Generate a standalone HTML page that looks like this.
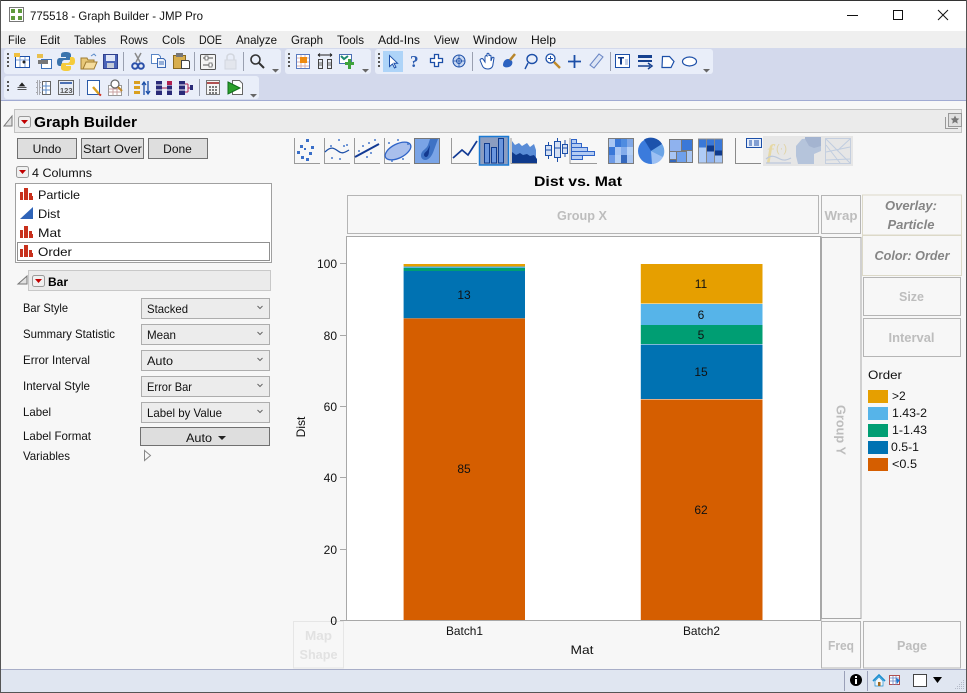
<!DOCTYPE html>
<html><head><meta charset="utf-8"><title>775518 - Graph Builder - JMP Pro</title>
<style>
html,body{margin:0;padding:0;background:#f7f7f7;width:967px;height:693px;overflow:hidden}
svg{display:block}
text{font-family:"Liberation Sans",sans-serif;font-size:12px;fill:#111}
.b{font-weight:bold}
.z{font-weight:bold;fill:#bdbdbd;text-anchor:middle;font-size:13px}
.c{text-anchor:middle}
.ov{font-weight:bold;font-style:italic;fill:#858585;text-anchor:middle;font-size:13px}
</style></head><body>
<svg width="967" height="693" viewBox="0 0 967 693" xmlns="http://www.w3.org/2000/svg">
<defs>
<g id="red"><rect x=".5" y=".5" width="12" height="11" rx="2" fill="#f0f0f0" stroke="#9a9a9a"/><path d="M3 4h7l-3.500 4z" fill="#c00000"/></g>
<g id="nom"><path d="M0 13V5h3v8zM4 13V1h4v12zM9 13V6h3v3h1v4z" fill="#c8301c"/></g>
<g id="combo"><rect x=".5" y=".5" width="128" height="20" fill="#ececec" stroke="#adadad"/><path d="M116.500 8l2.500 2.500 2.500-2.500" fill="none" stroke="#666"/></g>
<path id="ovf" d="M0 0h7M0 2h7l-3.500 3.500z" fill="#666" stroke="none"/>
<g id="axes"><path d="M.5 0v25.500H26" fill="none" stroke="#9a9a9a"/></g>
</defs>

<rect width="967" height="693" fill="#f7f7f7"/>
<!-- title bar -->
<rect width="967" height="31" fill="#fff"/>
<rect width="967" height="1" fill="#333"/>
<rect x="9.500" y="7.500" width="14" height="14" fill="#fff" stroke="#777"/>
<path d="M11 9h4v4h-4zM18 9h4v4h-4zM11 16h4v4h-4zM18 16h4v4h-4z" fill="#5f9a3c"/>
<text x="30" y="20" textLength="173" lengthAdjust="spacingAndGlyphs">775518 - Graph Builder - JMP Pro</text>
<path d="M847 15.500h11" stroke="#111"/>
<rect x="893.500" y="10.500" width="9" height="9" fill="none" stroke="#111"/>
<path d="M938 10l10 10M948 10l-10 10" stroke="#111" fill="none"/>
<!-- menu -->
<rect y="31" width="967" height="17" fill="#efefef"/>
<g>
<text x="8" y="44" textLength="18" lengthAdjust="spacingAndGlyphs">File</text>
<text x="40" y="44" textLength="20" lengthAdjust="spacingAndGlyphs">Edit</text>
<text x="74" y="44" textLength="32" lengthAdjust="spacingAndGlyphs">Tables</text>
<text x="120" y="44" textLength="28" lengthAdjust="spacingAndGlyphs">Rows</text>
<text x="162" y="44" textLength="23" lengthAdjust="spacingAndGlyphs">Cols</text>
<text x="199" y="44" textLength="23" lengthAdjust="spacingAndGlyphs">DOE</text>
<text x="236" y="44" textLength="41" lengthAdjust="spacingAndGlyphs">Analyze</text>
<text x="291" y="44" textLength="32" lengthAdjust="spacingAndGlyphs">Graph</text>
<text x="337" y="44" textLength="27" lengthAdjust="spacingAndGlyphs">Tools</text>
<text x="378" y="44" textLength="42" lengthAdjust="spacingAndGlyphs">Add-Ins</text>
<text x="434" y="44" textLength="25" lengthAdjust="spacingAndGlyphs">View</text>
<text x="473" y="44" textLength="44" lengthAdjust="spacingAndGlyphs">Window</text>
<text x="531" y="44" textLength="25" lengthAdjust="spacingAndGlyphs">Help</text>
</g>
<!-- toolbars -->
<rect y="48" width="967" height="52" fill="#d3d9ec"/>
<rect y="100" width="967" height="1" fill="#a0aad2"/>
<rect x="4" y="49" width="277" height="25" rx="3" fill="#e9eef9"/>
<rect x="285" y="49" width="86" height="25" rx="3" fill="#e9eef9"/>
<rect x="375" y="49" width="338" height="25" rx="3" fill="#e9eef9"/>
<rect x="4" y="76" width="255" height="23" rx="3" fill="#e9eef9"/>
<g fill="#555">
<path d="M7 53h2v2H7zM7 57h2v2H7zM7 61h2v2H7zM7 65h2v2H7z"/>
<path d="M288 53h2v2h-2zM288 57h2v2h-2zM288 61h2v2h-2zM288 65h2v2h-2z"/>
<path d="M378 53h2v2h-2zM378 57h2v2h-2zM378 61h2v2h-2zM378 65h2v2h-2z"/>
<path d="M7 81h2v2H7zM7 85h2v2H7zM7 89h2v2H7z"/>
</g>
<g stroke="#9aa0b0"><path d="M123.500 52v19M194.500 52v19M243.500 52v19M472.500 52v19M610.500 52v19M79.500 79v17M128.500 79v17M199.500 79v17"/></g>
<use href="#ovf" x="272" y="67"/><use href="#ovf" x="362" y="67"/><use href="#ovf" x="703" y="67"/><use href="#ovf" x="250" y="92"/>

<!-- row1 icons -->
<rect x="15.500" y="56.500" width="14" height="11" fill="#fff" stroke="#1c4fa8"/><path d="M16 60h13M20 57v10M25 57v10" stroke="#7d9fd6"/><path d="M14 53h6v4h-6z" fill="#f0c040"/><circle cx="24" cy="62" r="1.500" fill="#222"/>
<rect x="41.500" y="59.500" width="10" height="9" fill="#fff" stroke="#3a70b8"/><rect x="37" y="54" width="6" height="4" fill="#e8c050"/><path d="M38 61h10M38 63h10" stroke="#777" stroke-width="2"/>
<path d="M66 52c-4 0-5 1-5 3v2h5v1h-6c-2 0-3 1-3 4s1 4 3 4h2v-3c0-2 1-3 3-3h4c1 0 2-1 2-2v-3c0-2-2-3-5-3z" fill="#3b74ad"/>
<path d="M66 71c4 0 5-1 5-3v-2h-5v-1h6c2 0 3-1 3-4s-1-4-3-4h-2v3c0 2-1 3-3 3h-4c-1 0-2 1-2 2v3c0 2 2 3 5 3z" fill="#f5cc3c"/>
<path d="M81 58h6l1 2h6v9H81z" fill="#e8c878" stroke="#a07c30"/><path d="M83 69l3-7h11l-3 7z" fill="#f5dc9c" stroke="#a07c30"/><path d="M91 56l3-2 2 2" fill="none" stroke="#5a8ac8"/>
<rect x="103.500" y="54.500" width="14" height="14" fill="#4a63b8" stroke="#30408c"/><rect x="106" y="55" width="9" height="6" fill="#dfe6f7"/><rect x="107" y="63" width="7" height="5" fill="#c5cbd8"/>
<path d="M135 53l5 9M141 53l-5 9" stroke="#8a8a8a" stroke-width="1.500"/><circle cx="135" cy="66" r="2.800" fill="none" stroke="#2a4fa8" stroke-width="2"/><circle cx="141" cy="66" r="2.800" fill="none" stroke="#2a4fa8" stroke-width="2"/>
<path d="M151.500 54.500h7l2 2v7h-9z" fill="#fff" stroke="#5a86c6"/><path d="M157.500 58.500h6l2 2v7h-8z" fill="#eef3fb" stroke="#3a68b4"/><path d="M159 62h5M159 64h5" stroke="#3a68b4"/>
<rect x="173.500" y="55.500" width="12" height="13" fill="#d8ae4e" stroke="#8a6a20"/><rect x="176" y="53" width="7" height="4" fill="#777"/><path d="M181.500 60.500h7l1 1v7h-8z" fill="#fff" stroke="#444"/>
<rect x="200.500" y="54.500" width="15" height="15" rx="1" fill="#f4f4f4" stroke="#555"/><path d="M203 58h10M203 65h10" stroke="#555"/><rect x="205" y="56" width="3" height="4" fill="#fff" stroke="#555" stroke-width=".7"/><rect x="209" y="63" width="3" height="4" fill="#fff" stroke="#555" stroke-width=".7"/>
<rect x="225" y="60" width="11" height="9" fill="#e3e6ed" stroke="#d2d6de"/><path d="M227 60v-3c0-4 7-4 7 0v3" fill="none" stroke="#d2d6de" stroke-width="1.500"/>
<circle cx="255.500" cy="59.500" r="4.500" fill="none" stroke="#333" stroke-width="1.600"/><path d="M259 63l5 5" stroke="#333" stroke-width="2"/>
<!-- tb2 -->
<rect x="296.500" y="54.500" width="13" height="14" fill="#fff" stroke="#5a7ac0"/><path d="M297 58h12M297 62h12M297 66h12M301 55v13M305 55v13" stroke="#d8b0b0"/><rect x="300" y="57" width="7" height="6" fill="#ee8a10"/>
<path d="M318.500 59.500h4v9h-4zM327.500 59.500h4v9h-4z" fill="#e8edf6" stroke="#444"/><path d="M318 55h14M318 55l2-1.500M318 55l2 1.500M332 55l-2-1.500M332 55l-2 1.500" stroke="#222" fill="none"/><path d="M319 63h3M328 63h3M319 65h3M328 65h3" stroke="#666"/>
<rect x="339.500" y="54.500" width="12" height="9" fill="#fff" stroke="#4a6fb4"/><path d="M341 56l3 3 4-3" stroke="#1e8a70" stroke-width="2" fill="none"/><path d="M348 59h3v3h3v3h-3v4h-3v-4h-3v-3h3z" fill="#3fa33c"/>
<!-- tb3 -->
<rect x="383" y="51" width="20" height="21" fill="#aed4f8"/>
<path d="M389.500 55.500v11l3-2.500 2 4 1.500-.8-2-4h3.500z" fill="#fff" stroke="#1c4fa8"/>
<text x="410" y="67" class="b" style="font-size:17px;font-family:'Liberation Serif',serif;fill:#2c5cb0">?</text>
<path d="M434.500 54.500h4v4h4v4h-4v4h-4v-4h-4v-4h4z" fill="#fff" stroke="#1c4fa8" stroke-width="1.300"/>
<circle cx="459" cy="61" r="6" fill="#c8d8f2" stroke="#1c4fa8"/><circle cx="459" cy="61" r="2.500" fill="none" stroke="#1c4fa8"/><path d="M459 55v12M453 61h12" stroke="#1c4fa8" stroke-width=".8"/>
<path d="M480 60l2 5c1 3 3 4 6 4s5-2 5-5l1-6c0-1-2-1-2 0l-1 3 0-5c0-1-2-1-2 0v-2c0-1-2-1-2 0v2c-1-1-2 0-2 1v5l-2-3c-1-1-3 0-3 1z" fill="#fff" stroke="#1c4fa8"/>
<path d="M508 59c-3 0-5 3-5 6 0 2 3 3 6 2 3-1 4-4 3-6-1-1-2-2-4-2z" fill="#2c62c0"/><path d="M510 60l5-6" stroke="#b8862c" stroke-width="2.500"/>
<ellipse cx="532" cy="59" rx="5" ry="4.500" fill="none" stroke="#1c4fa8" stroke-width="1.400"/><path d="M528 63l-3 6" stroke="#1c4fa8" stroke-width="1.400"/>
<circle cx="550.500" cy="58.500" r="4.500" fill="#fff" stroke="#1c4fa8" stroke-width="1.300"/><path d="M548 58.500h5M550.500 56v5" stroke="#1c4fa8"/><path d="M554 62l6 6" stroke="#c08a2a" stroke-width="2.400"/>
<path d="M574.500 55v13M568 61.500h13" stroke="#1c4fa8" stroke-width="1.800"/>
<path d="M590 65l9-11 4 3-9 11z" fill="#dde5f5" stroke="#6a86c4"/>
<rect x="615.500" y="54.500" width="14" height="13" fill="#fff" stroke="#1c4fa8"/><path d="M618 57h6v1.500h-2v6h-2v-6h-2z" fill="#123a88"/><path d="M625 60h3M625 62h3M625 64h3" stroke="#8aa0d0"/>
<path d="M638 55h14v3h-14zM638 60h14v2h-14z" fill="#15408f"/><path d="M638 66h12M648 63l4 3-4 3" stroke="#15408f" stroke-width="1.500" fill="none"/>
<path d="M662.500 56.500h7l4.500 5-3 6h-9z" fill="#fff" stroke="#1c4fa8" stroke-width="1.200"/>
<ellipse cx="689.500" cy="61.500" rx="7" ry="4.500" fill="#fff" stroke="#1c4fa8" stroke-width="1.200"/>
<!-- row2 -->
<path d="M22 83l2.500 3h-5zM17.500 87.500h9M17.500 89.500h9" fill="#222" stroke="#222" stroke-width=".8"/>
<path d="M37 81h3v3h-3zM37 86h3v3h-3zM37 91h3v3h-3z" fill="none" stroke="#666" stroke-dasharray="1 1"/><rect x="42.500" y="81.500" width="8" height="13" fill="#fff" stroke="#666"/><path d="M42 86h8M42 90h8M46 82v12" stroke="#5a8ac8"/>
<rect x="58.500" y="80.500" width="15" height="14" fill="#e8edf6" stroke="#666"/><path d="M60 83h12" stroke="#4a6fb4" stroke-width="2"/><text x="60" y="93" style="font-size:7.500px;fill:#555" class="b">123</text>
<rect x="87.500" y="80.500" width="12" height="14" fill="#fff" stroke="#2a5aa8"/><path d="M93 87l6 7" stroke="#d9a020" stroke-width="2.400"/><path d="M99 94l2 1.500" stroke="#d03020" stroke-width="2"/>
<rect x="108.500" y="85.500" width="13" height="10" fill="#fff" stroke="#999"/><path d="M109 89h12M109 92h12M113 86v9M117 86v9" stroke="#c8a0a0"/><circle cx="115" cy="84" r="4" fill="#fff" stroke="#666" stroke-width="1.200"/><path d="M118 87l4 4" stroke="#c08a2a" stroke-width="2"/>
<path d="M134 81h6v3h-6zM134 86h6v3h-6zM134 91h6v3h-6z" fill="#d9a020"/><path d="M144 95v-13M142 85l2-3 2 3M148 81v13M146 91l2 3 2-3" fill="none" stroke="#1c4fa8" stroke-width="1.300"/>
<path d="M156 81h6v14h-6zM167 81h5v14h-5z" fill="#2a2a78"/><path d="M156 85h6M156 90h6M167 85h5M167 90h5" stroke="#fff"/><path d="M162 88h5" stroke="#b02050"/><path d="M167 81h5v4h-5z" fill="#b02050"/>
<path d="M179 81h6v14h-6z" fill="#2a2a78"/><path d="M179 85h6M179 90h6" stroke="#fff"/><path d="M185 84h3M188 84v8M185 92h3M188 88h3" stroke="#b02050" fill="none"/><rect x="190" y="85" width="3" height="5" fill="#2a2a78"/>
<rect x="206.500" y="80.500" width="13" height="14" fill="#f4f4f4" stroke="#777"/><path d="M207 83h12" stroke="#b05050" stroke-width="2"/><path d="M209 87h2M212 87h2M215 87h2M209 90h2M212 90h2M215 90h2M209 93h2M212 93h2M215 93h2" stroke="#555" stroke-width="1.500"/>
<path d="M232.500 80.500h7l3 3v11h-10z" fill="#fff" stroke="#666"/><path d="M228 82l12 6-12 6z" fill="#2ca02c" stroke="#0f6f1a"/>

<!-- Graph Builder header -->
<rect x="14.500" y="109.500" width="947" height="23" fill="#ebebeb" stroke="#c2c2c2"/>
<path d="M12 116v10H4z" fill="#e2e2e2" stroke="#777"/>
<use href="#red" x="18" y="116"/>
<text x="34" y="127" class="b" style="font-size:15px;fill:#000" textLength="103" lengthAdjust="spacingAndGlyphs">Graph Builder</text>
<path d="M945.500 117v11.500H958" fill="none" stroke="#999"/>
<rect x="948.500" y="113.500" width="13" height="13" fill="#e0e0e0" stroke="#999"/>
<path d="M955 115.500l1.300 2.800 3 .3-2.200 2 .7 3-2.800-1.600-2.800 1.600.7-3-2.200-2 3-.3z" fill="#777"/>

<!-- left panel -->
<rect x="17.500" y="138.500" width="59" height="20" fill="#dedede" stroke="#707070"/>
<rect x="81.500" y="138.500" width="62" height="20" fill="#dedede" stroke="#707070"/>
<rect x="148.500" y="138.500" width="59" height="20" fill="#dedede" stroke="#707070"/>
<text x="47" y="153" class="c">Undo</text>
<text x="112.500" y="153" class="c" textLength="59" lengthAdjust="spacingAndGlyphs">Start Over</text>
<text x="177.500" y="153" class="c">Done</text>
<use href="#red" x="16" y="166"/>
<text x="32" y="177" textLength="60" lengthAdjust="spacingAndGlyphs">4 Columns</text>
<rect x="15.500" y="183.500" width="256" height="79" fill="#fff" stroke="#a0a0a0"/>
<use href="#nom" x="20" y="187"/><text x="38" y="199" textLength="42" lengthAdjust="spacingAndGlyphs">Particle</text>
<path d="M20 219l13-12v12z" fill="#2f64b8"/><text x="38" y="218" textLength="22" lengthAdjust="spacingAndGlyphs">Dist</text>
<use href="#nom" x="20" y="225"/><text x="38" y="237" textLength="23" lengthAdjust="spacingAndGlyphs">Mat</text>
<rect x="17.500" y="242.500" width="252" height="18" fill="none" stroke="#222" stroke-dasharray="1 1"/>
<use href="#nom" x="20" y="244"/><text x="38" y="256" textLength="34" lengthAdjust="spacingAndGlyphs">Order</text>

<rect x="28.500" y="270.500" width="242" height="20" fill="#ebebeb" stroke="#c8c8c8"/>
<path d="M27 276v8H18z" fill="#e2e2e2" stroke="#777"/>
<use href="#red" x="32" y="275"/>
<text x="48" y="286" class="b" style="fill:#000" textLength="20" lengthAdjust="spacingAndGlyphs">Bar</text>

<text x="23" y="312" textLength="45" lengthAdjust="spacingAndGlyphs">Bar Style</text>
<text x="23" y="338" textLength="92" lengthAdjust="spacingAndGlyphs">Summary Statistic</text>
<text x="23" y="364" textLength="67" lengthAdjust="spacingAndGlyphs">Error Interval</text>
<text x="23" y="390" textLength="67" lengthAdjust="spacingAndGlyphs">Interval Style</text>
<text x="23" y="416" textLength="28" lengthAdjust="spacingAndGlyphs">Label</text>
<text x="23" y="440" textLength="68" lengthAdjust="spacingAndGlyphs">Label Format</text>
<text x="23" y="460" textLength="47" lengthAdjust="spacingAndGlyphs">Variables</text>
<use href="#combo" x="141" y="298"/><text x="147" y="313" textLength="41" lengthAdjust="spacingAndGlyphs">Stacked</text>
<use href="#combo" x="141" y="324"/><text x="147" y="339" textLength="29" lengthAdjust="spacingAndGlyphs">Mean</text>
<use href="#combo" x="141" y="350"/><text x="147" y="365" textLength="26" lengthAdjust="spacingAndGlyphs">Auto</text>
<use href="#combo" x="141" y="376"/><text x="147" y="391" textLength="45" lengthAdjust="spacingAndGlyphs">Error Bar</text>
<use href="#combo" x="141" y="402"/><text x="147" y="417" textLength="75" lengthAdjust="spacingAndGlyphs">Label by Value</text>
<rect x="140.500" y="427.500" width="129" height="18" fill="#dedede" stroke="#707070"/>
<text x="186" y="442" textLength="26" lengthAdjust="spacingAndGlyphs">Auto</text>
<path d="M218 436h8l-4 4z" fill="#222"/>
<path d="M144.500 450.500l6 5-6 5z" fill="#f7f7f7" stroke="#888"/>

<!-- graph type icons -->
<g fill="#3a6fc8">
<use href="#axes" x="294" y="138"/>
<path d="M306 139h3v3h-3zM300 145h3v3h-3zM311 146h3v3h-3zM304 148h2v2h-2zM297 151h3v3h-3zM309 152h3v3h-3zM301 156h3v3h-3zM306 158h3v3h-3z"/>
<use href="#axes" x="324" y="138"/>
<path d="M325 152c6-6 9-4 13-1s6 2 11-1" fill="none" stroke="#1c4fa8" stroke-width="1.300"/>
<path d="M330 145h2v2h-2zM338 139h2v2h-2zM343 145h2v2h-2zM331 157h2v2h-2zM339 158h2v2h-2zM346 144h2v2h-2z" opacity=".7"/>
<use href="#axes" x="354" y="138"/>
<path d="M355 157l24-13" stroke="#123a94" stroke-width="2" fill="none"/>
<path d="M368 142h2v2h-2zM362 145h2v2h-2zM358 150h2v2h-2zM370 152h2v2h-2zM366 156h2v2h-2zM374 139h2v2h-2z" opacity=".7"/>
<use href="#axes" x="384" y="138"/>
<ellipse cx="398" cy="151" rx="14" ry="7" transform="rotate(-27 398 151)" fill="#a9bfec" stroke="#2f64c8" stroke-width="1.300"/>
<path d="M388 142h2v2h-2zM397 139h2v2h-2zM391 160h2v2h-2zM402 158h2v2h-2zM407 143h2v2h-2z" opacity=".7"/>
</g>
<rect x="414.500" y="138.500" width="25" height="25" fill="#7aa4e6" stroke="#777"/>
<path d="M421 156c0-6 5-6 7-11l2-6h8l-4 11c-2 6-5 10-9 10-2 0-4-2-4-4z" fill="#3e72c4"/>
<path d="M424 155c0-3 3-3 4-6l2-4-1 6c0 3-1 6-3 6-1 0-2-1-2-2z" fill="#13398f"/>
<use href="#axes" x="451" y="138"/>
<path d="M453 158l9-8 6 5 9-14" fill="none" stroke="#123a94" stroke-width="1.700"/>
<rect x="479.500" y="136.500" width="29" height="28.500" fill="#8c9dc0" stroke="#1a7ad4" stroke-width="1.500"/>
<path d="M484.500 143.500h5v19.500h-5zM491.500 147.500h5v15.500h-5zM498.500 138.500h5v24.500h-5z" fill="#6b96dd" stroke="#0f3a8c"/>
<path d="M511 138v25.500h26" fill="none" stroke="#9a9a9a"/>
<path d="M512 141l3 4 4-2 3 3 5-3 3 4 4-3 2 6v13h-24z" fill="#5a8cd6"/>
<path d="M512 152l4 3 4-2 3 2 4-1 3 2 4-1 3 4v4h-25z" fill="#0f3a8c"/>
<g fill="#d3dff3" stroke="#1c4fa8">
<rect x="545.500" y="145.500" width="6" height="10"/>
<rect x="554.500" y="141.500" width="6" height="16"/>
<rect x="562.500" y="144.500" width="5" height="9"/>
<path d="M557.500 138v3M557.500 158v4M548.500 142v3M548.500 156v3M565 140v4M565 154v3M545 150h6M554 148h6M562 148h5" fill="none"/>
</g>
<path d="M570 138v25.500h27" fill="none" stroke="#9a9a9a"/>
<path d="M571.500 139.500h5v4h-5zM571.500 143.500h10v4h-10zM571.500 147.500h16v4h-16zM571.500 151.500h23v4h-23zM571.500 155.500h11v4h-11z" fill="#b5ccf2" stroke="#2f64c8"/>
<!-- heatmap -->
<rect x="608" y="138" width="26" height="26" fill="#7c7c7c"/>
<path d="M609 139h6v8h-6z" fill="#a9c6f3"/><path d="M615 139h6v8h-6z" fill="#3a78d8"/><path d="M621 139h6v8h-6z" fill="#4f8ce0"/><path d="M627 139h6v8h-6z" fill="#7ea6e6"/>
<path d="M609 147h6v8h-6z" fill="#3a78d8"/><path d="M615 147h6v8h-6z" fill="#a9c6f3"/><path d="M621 147h6v8h-6z" fill="#84aceb"/><path d="M627 147h6v8h-6z" fill="#b5d0f5"/>
<path d="M609 155h6v8h-6z" fill="#6d9ae6"/><path d="M615 155h6v8h-6z" fill="#b5d0f5"/><path d="M621 155h6v8h-6z" fill="#3568bd"/><path d="M627 155h6v8h-6z" fill="#a9c6f3"/>
<!-- pie -->
<circle cx="651" cy="151" r="13" fill="#3b7bdc"/>
<path d="M651 151L644 139.500A13 13 0 0 1 662 144z" fill="#1c52ac"/>
<path d="M651 151L662 144A13 13 0 0 1 663 157z" fill="#6ba4e6"/>
<path d="M651 151L663 157A13 13 0 0 1 652 164z" fill="#9cc0f3"/>
<!-- treemap -->
<rect x="669" y="139" width="24" height="24" fill="#787878"/>
<path d="M670 140h11v11h-11z" fill="#8fb2ee"/><path d="M682 140h10v10h-10z" fill="#3a78d8"/><path d="M670 152h6v7h-6z" fill="#a8c6f4"/><path d="M670 160h6v2h-6z" fill="#3568bd"/><path d="M677 152h9v10h-9z" fill="#6ea0ec"/><path d="M687 151h5v11h-5z" fill="#a8c6f4"/>
<!-- mosaic -->
<rect x="698" y="138.500" width="25" height="25" fill="#888"/>
<path d="M699 139.500h7v8h-7z" fill="#3a78d8"/><path d="M699 147.500h7v15h-7z" fill="#b0ccf6"/>
<path d="M707 139.500h7v6h-7z" fill="#3a78d8"/><path d="M707 145.500h7v6h-7z" fill="#0f3a8c"/><path d="M707 151.500h7v11h-7z" fill="#8fb2ee"/>
<path d="M715 139.500h7v11h-7z" fill="#3a78d8"/><path d="M715 150.500h7v5h-7z" fill="#0f3a8c"/><path d="M715 155.500h7v7h-7z" fill="#a8c6f4"/>
<!-- caption -->
<path d="M735.500 138v25.500H761" fill="none" stroke="#8a8a8a"/>
<rect x="746.500" y="138.500" width="15" height="9" fill="#e6eefb" stroke="#1c4fa8"/>
<path d="M749 141h3M749 143h3M749 145h3M754 141h5M754 143h5M754 145h5" stroke="#1c4fa8"/>
<rect x="763" y="136" width="90" height="30" fill="#e6e6e6"/>
<text x="767" y="158" style="font-family:'Liberation Serif',serif;font-size:20px;font-style:italic;fill:#e6d8a4;font-weight:bold">f</text>
<text x="776" y="152" style="font-size:11px;fill:#e0d4a8">(·)</text>
<path d="M766 159c6-5 10-2 14 0s7 1 11-1M766 163h25" fill="none" stroke="#bcc8dc" stroke-width="1.200"/>
<path d="M796 146l6-7 12-1 7-1v14l-7 3v10h-16l-2-8z" fill="#b5c4db"/>
<path d="M805 139l4 7 5 2 7-2v-9h-16z" fill="#a4b4d0"/>
<rect x="825.500" y="138.500" width="25" height="25" fill="#e6e6e6" stroke="#c4cede"/>
<path d="M826 139l24 24M850 139l-13 12M826 152l24-5M826 160l24-1M826 145l14 18" stroke="#c0cde0" fill="none"/>

<text x="578" y="186" class="b c" style="font-size:14px;fill:#000" textLength="88" lengthAdjust="spacingAndGlyphs">Dist vs. Mat</text>

<!-- zones -->
<rect x="347.500" y="195.500" width="471" height="38" fill="#f7f7f7" stroke="#b5b5b5"/>
<text x="582" y="220" class="z" textLength="50" lengthAdjust="spacingAndGlyphs">Group X</text>
<rect x="821.500" y="195.500" width="39" height="38" fill="#f7f7f7" stroke="#b5b5b5"/>
<text x="841" y="220" class="z" textLength="33" lengthAdjust="spacingAndGlyphs">Wrap</text>
<rect x="862.500" y="195" width="99" height="40" fill="#f7f7f7" stroke="#dcd9c8"/>
<rect x="862.500" y="235.500" width="99" height="40" fill="#f7f7f7" stroke="#dcd9c8"/>
<text x="911" y="210" class="ov" textLength="52" lengthAdjust="spacingAndGlyphs">Overlay:</text>
<text x="911" y="229" class="ov" textLength="47" lengthAdjust="spacingAndGlyphs">Particle</text>
<text x="912" y="260" class="ov" textLength="75" lengthAdjust="spacingAndGlyphs">Color: Order</text>
<rect x="863.500" y="277.500" width="97" height="38" fill="#f7f7f7" stroke="#b5b5b5"/>
<text x="911.500" y="301" class="z" textLength="25" lengthAdjust="spacingAndGlyphs">Size</text>
<rect x="863.500" y="318.500" width="97" height="38" fill="#f7f7f7" stroke="#b5b5b5"/>
<text x="911.500" y="342" class="z" textLength="46" lengthAdjust="spacingAndGlyphs">Interval</text>

<rect x="821.500" y="237.500" width="39.500" height="381" fill="#f7f7f7" stroke="#a8a8a8"/>
<text transform="translate(836.500,430) rotate(90)" class="z" textLength="50" lengthAdjust="spacingAndGlyphs">Group Y</text>

<!-- bottom zones (drawn before axis labels so the 0 label stays visible) -->
<rect x="293.500" y="621.500" width="50" height="46.500" fill="#f7f7f7" stroke="#e6e6e6"/>
<text x="318.500" y="640" class="z" style="fill:#e2e2e2" textLength="27" lengthAdjust="spacingAndGlyphs">Map</text>
<text x="318.500" y="659" class="z" style="fill:#e2e2e2" textLength="38" lengthAdjust="spacingAndGlyphs">Shape</text>
<rect x="821.500" y="621.500" width="39" height="46.500" fill="#f7f7f7" stroke="#b5b5b5"/>
<text x="841" y="650" class="z" textLength="26" lengthAdjust="spacingAndGlyphs">Freq</text>
<rect x="863.500" y="621.500" width="97" height="46.500" fill="#f7f7f7" stroke="#b5b5b5"/>
<text x="912" y="650" class="z" textLength="30" lengthAdjust="spacingAndGlyphs">Page</text>

<!-- graph frame -->
<rect x="346.500" y="236.500" width="474" height="384" fill="#fff" stroke="#a8a8a8"/>
<rect x="820" y="236" width="1.500" height="385" fill="#a8a8a8"/>
<rect x="403.600" y="264" width="121.400" height="2.500" fill="#e69f00"/>
<rect x="403.600" y="266.500" width="121.400" height="1.500" fill="#56b4e9"/>
<rect x="403.600" y="268" width="121.400" height="3" fill="#009e73"/>
<rect x="403.600" y="271" width="121.400" height="47" fill="#0072b2"/>
<rect x="403.600" y="318" width="121.400" height=".7" fill="#7fa8b8"/>
<rect x="403.600" y="318.500" width="121.400" height="301.500" fill="#d55e00"/>
<rect x="640.800" y="264" width="121.700" height="39.500" fill="#e69f00"/>
<rect x="640.800" y="304" width="121.700" height="21" fill="#56b4e9"/>
<rect x="640.800" y="325" width="121.700" height="19" fill="#009e73"/>
<rect x="640.800" y="344.500" width="121.700" height="54.500" fill="#0072b2"/>
<rect x="640.800" y="399.500" width="121.700" height="220.500" fill="#d55e00"/>
<text x="464" y="299" class="c">13</text>
<text x="464" y="473" class="c">85</text>
<text x="701" y="288" class="c">11</text>
<text x="701" y="319" class="c">6</text>
<text x="701" y="339" class="c">5</text>
<text x="701" y="376" class="c">15</text>
<text x="701" y="514" class="c">62</text>

<!-- axes -->
<g stroke="#a8a8a8"><path d="M340 263.500h6M340 335.500h6M340 406.500h6M340 477.500h6M340 549.500h6M340 620.500h6"/></g>
<text x="337" y="268" text-anchor="end">100</text>
<text x="337" y="340" text-anchor="end">80</text>
<text x="337" y="411" text-anchor="end">60</text>
<text x="337" y="482" text-anchor="end">40</text>
<text x="337" y="554" text-anchor="end">20</text>
<text x="337" y="625" text-anchor="end">0</text>
<text transform="translate(305,427) rotate(-90)" class="c">Dist</text>
<text x="464.500" y="635" class="c" textLength="37" lengthAdjust="spacingAndGlyphs">Batch1</text>
<text x="701.500" y="635" class="c" textLength="37" lengthAdjust="spacingAndGlyphs">Batch2</text>
<text x="582" y="654" class="c" textLength="23" lengthAdjust="spacingAndGlyphs">Mat</text>

<!-- legend -->
<text x="868" y="379" textLength="34" lengthAdjust="spacingAndGlyphs">Order</text>
<rect x="868" y="390" width="20" height="13" fill="#e69f00"/><text x="892" y="400">&gt;2</text>
<rect x="868" y="407" width="20" height="13" fill="#56b4e9"/><text x="892" y="417" textLength="35" lengthAdjust="spacingAndGlyphs">1.43-2</text>
<rect x="868" y="424" width="20" height="13" fill="#009e73"/><text x="892" y="434" textLength="35" lengthAdjust="spacingAndGlyphs">1-1.43</text>
<rect x="868" y="441" width="20" height="13" fill="#0072b2"/><text x="891" y="451" textLength="28" lengthAdjust="spacingAndGlyphs">0.5-1</text>
<rect x="868" y="458" width="20" height="13" fill="#d55e00"/><text x="892" y="468" textLength="25" lengthAdjust="spacingAndGlyphs">&lt;0.5</text>

<!-- status bar -->
<rect y="669" width="967" height="1" fill="#a8aec8"/>
<rect y="670" width="967" height="22" fill="#e0e6f1"/>
<rect y="692" width="967" height="1" fill="#555"/>
<path d="M844.500 671v20M867.500 671v20" stroke="#9aa0b8"/>
<circle cx="856" cy="680" r="6" fill="#000"/><path d="M855 679h2v5h-2zM855 676h2v2h-2z" fill="#fff"/>
<path d="M873 681l6-6 6 6" fill="none" stroke="#1a8ed0" stroke-width="1.600"/><path d="M875 681v5h8v-5l-4-4z" fill="#f2f6fa" stroke="#1a8ed0" stroke-width=".7"/><rect x="878" y="682" width="2.500" height="4" fill="#a06a20"/>
<rect x="889.500" y="675.500" width="10" height="9" fill="#fff" stroke="#b05050"/><path d="M890 678h9M890 681h9M893 676v9M896 676v9" stroke="#6a86c4" stroke-width=".8"/><path d="M896 678l4 2-3 4z" fill="#1a7ad4"/>
<rect x="913.500" y="674.500" width="13" height="12" fill="#fff" stroke="#444"/>
<path d="M933 677h9l-4.500 6z" fill="#000"/>
<g fill="#b4bac8"><path d="M963 680h1v1h-1zM961 682h1v1h-1zM963 682h1v1h-1zM959 684h1v1h-1zM961 684h1v1h-1zM963 684h1v1h-1zM957 686h1v1h-1zM959 686h1v1h-1zM961 686h1v1h-1zM963 686h1v1h-1zM955 688h1v1h-1zM957 688h1v1h-1zM959 688h1v1h-1zM961 688h1v1h-1zM963 688h1v1h-1z"/></g>
<!-- window borders -->
<rect x="0" y="0" width="1" height="693" fill="#555"/>
<rect x="966" y="0" width="1" height="693" fill="#555"/>
</svg>
</body></html>
